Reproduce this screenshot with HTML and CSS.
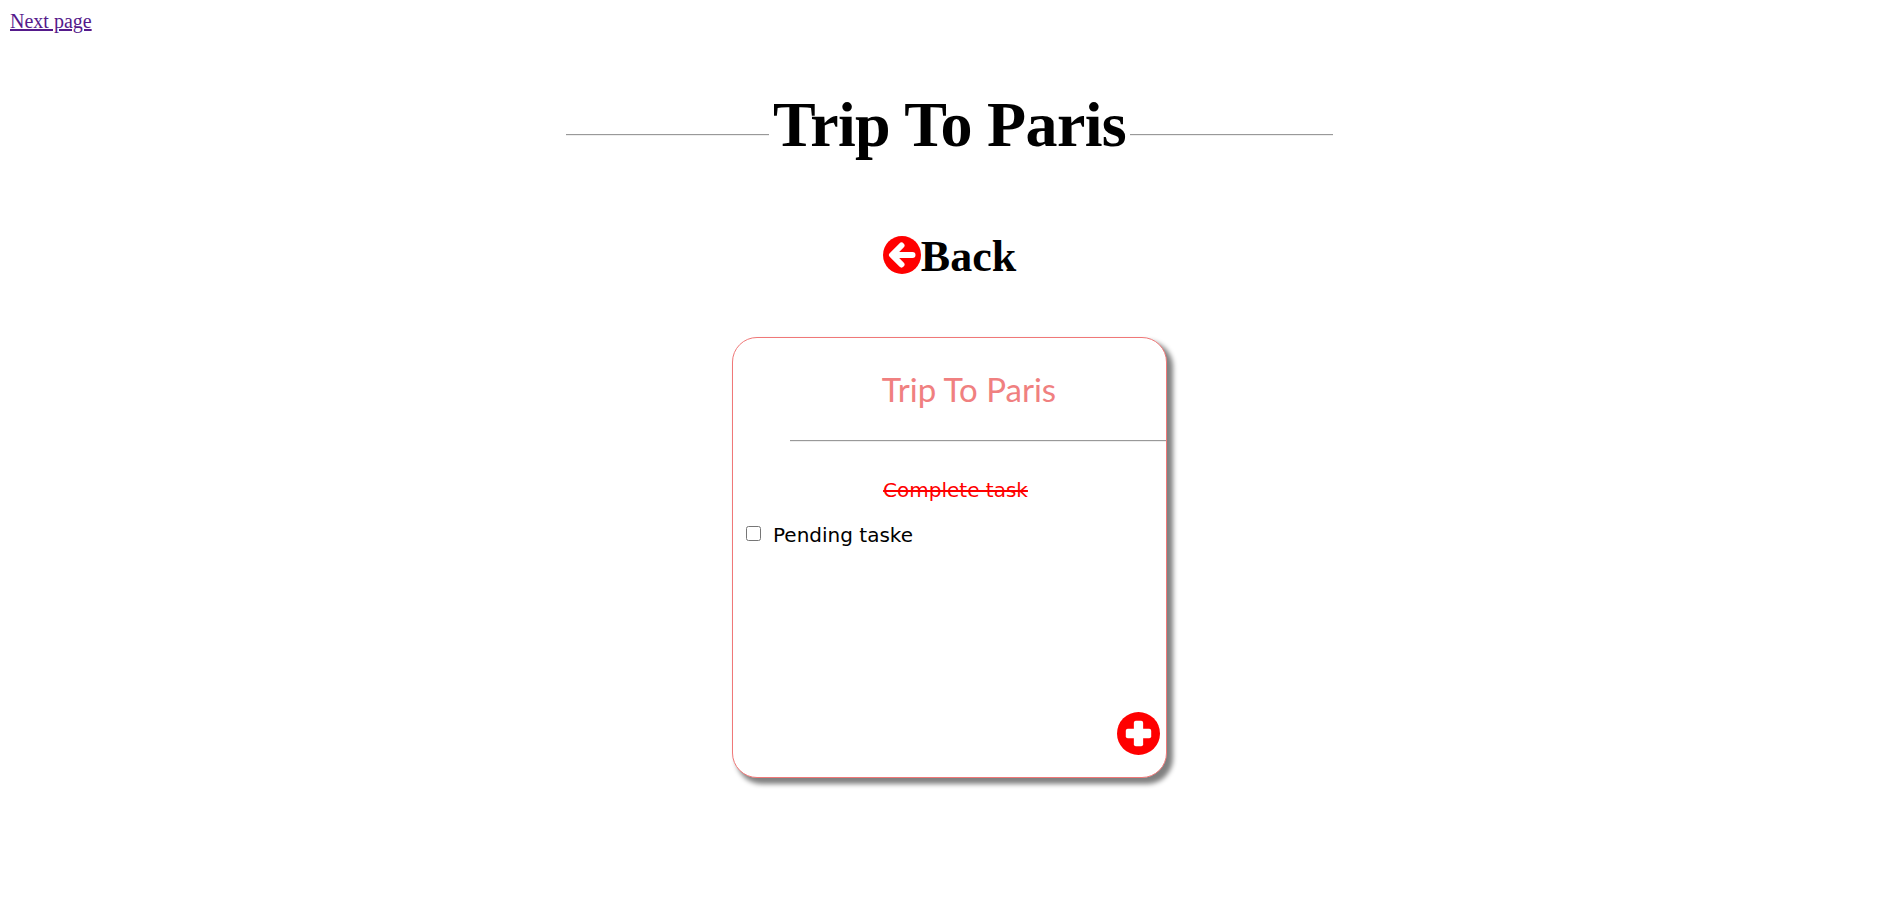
FILE: index.html
```html
<!DOCTYPE html>
<html lang="en">
<head>
    <meta charset="UTF-8">
    <title>Trip To Paris</title>
    <link rel="stylesheet" href="styles.css">
</head>
<body>
    <a class="next-link" href="#">Next page</a>

    <div class="page">
        <!-- Page title with a rule on each side -->
        <div class="title-row">
            <hr class="title-rule">
            <h1 class="page-title">Trip To Paris</h1>
            <hr class="title-rule">
        </div>

        <h2 class="back-row">
            <svg class="back-icon" viewBox="0 0 38 38">
                <circle cx="19" cy="19" r="19" fill="#ff0000"/>
                <path d="M18.5 9.5 L9 19 L18.5 28.5 M10 19 H29.5" fill="none" stroke="#fff" stroke-width="6" stroke-linejoin="round" stroke-linecap="round"/>
            </svg>Back
        </h2>

        <div class="card">
            <h3 class="card-title">Trip To Paris</h3>
            <hr class="card-rule">
            <p class="task-done">Complete task</p>
            <label class="task">
                <input type="checkbox">
                <span>Pending taske</span>
            </label>
            <svg class="add-icon" viewBox="0 0 44 44">
                <circle cx="22" cy="22" r="22" fill="#ff0000"/>
                <rect x="9" y="17.25" width="26" height="9.5" rx="2" fill="#fff"/>
                <rect x="17.25" y="9" width="9.5" height="26" rx="2" fill="#fff"/>
            </svg>
        </div>
    </div>
</body>
</html>
```

FILE: styles.css
```css
body {
    margin: 10px;
    font-family: "Liberation Serif", serif;
}

.next-link {
    font-size: 20px;
    color: #551a8b;
}

.page {
    padding: 0 0 60px 5px;
}

.title-row {
    display: flex;
    align-items: center;
    justify-content: center;
    margin-top: 55px;
}

.title-rule {
    width: 203px;
    height: 0;
    margin: 20px 0 0;
    border: 0;
    border-top: 1px solid #999;
    border-bottom: 1px solid #eee;
}

.page-title {
    margin: 0;
    font-size: 64px;
    line-height: 74px;
    font-weight: bold;
    letter-spacing: -0.65px;
    padding: 0 4px;
}

.back-row {
    display: flex;
    align-items: center;
    justify-content: center;
    margin: 70px 0 0;
    font-size: 44px;
    line-height: 50px;
}

.back-icon {
    width: 38px;
    height: 38px;
    margin-top: -4px;
}

.card {
    position: relative;
    box-sizing: border-box;
    width: 435px;
    height: 441px;
    margin: 55px auto 0;
    border: 1px solid #f07878;
    border-radius: 25px;
    background-color: white;
    box-shadow: 5px 5px 5px 1px gray;
}

.card-title {
    margin: 31px 0 0;
    padding-left: 39px;
    text-align: center;
    font-family: Lato, sans-serif;
    font-size: 33px;
    line-height: 40px;
    font-weight: 400;
    color: lightcoral;
}

.card-rule {
    height: 0;
    margin: 31px 0 0 57px;
    border: 0;
    border-top: 1px solid #999;
    border-bottom: 1px solid #eee;
}

.task-done {
    margin: 37px 0 0;
    padding-left: 12px;
    text-align: center;
    font-family: "DejaVu Sans", sans-serif;
    font-size: 20px;
    line-height: 22px;
    color: red;
    text-decoration: line-through;
}

.task {
    display: flex;
    align-items: center;
    gap: 12px;
    margin: 23px 0 0 13px;
    font-family: "DejaVu Sans", sans-serif;
    font-size: 20px;
    line-height: 22px;
    color: black;
}

.task input {
    width: 15px;
    height: 15px;
    margin: -3px 0 0;
}

.add-icon {
    position: absolute;
    right: 6px;
    bottom: 22px;
    width: 43px;
    height: 43px;
}
```
